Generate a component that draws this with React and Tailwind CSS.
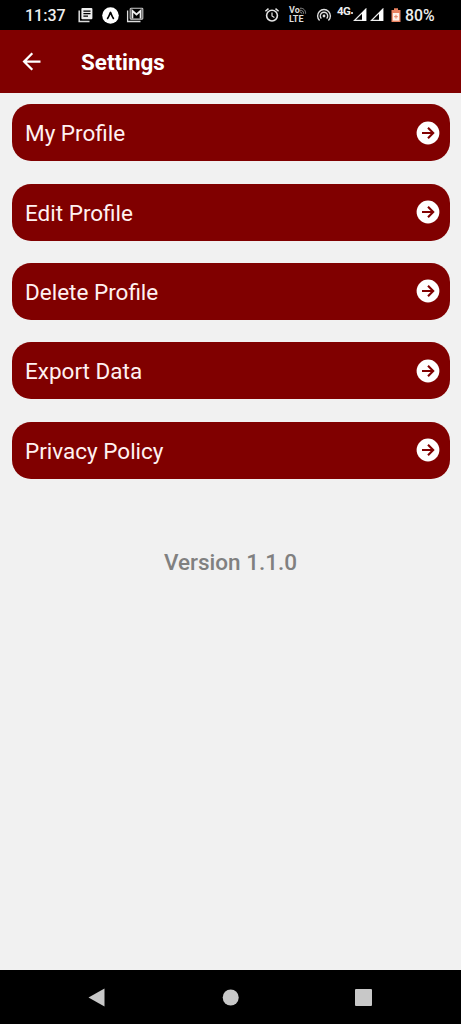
const items = ['My Profile', 'Edit Profile', 'Delete Profile', 'Export Data', 'Privacy Policy'];

function NotesIcon() {
  return (
    <svg className="ml-[13px] h-4 w-4 shrink-0" viewBox="0 0 16 16" fill="none">
      <path d="M1.2 3.5V14.5H11.5" stroke="#ddd" strokeWidth="1.5" />
      <rect x="3.4" y="1" width="11" height="11.3" rx="1" fill="#eee" />
      <path d="M5.4 4.2H12.5M5.4 6.7H12.5M5.4 9.2H10" stroke="#000" strokeWidth="1.2" />
    </svg>
  );
}

function CaretBadgeIcon() {
  return (
    <svg className="ml-2 h-[17px] w-[17px] shrink-0" viewBox="0 0 17 17">
      <circle cx="8.5" cy="8.5" r="8.3" fill="#fff" />
      <path d="M5.6 11.3C6.8 10 7.5 7.4 8.5 5.5C9.5 7.4 10.2 10 11.4 11.3" fill="none" stroke="#000" strokeWidth="1.7" strokeLinecap="round" strokeLinejoin="round" />
    </svg>
  );
}

function MailStackIcon() {
  return (
    <svg className="ml-[7px] h-4 w-[18px] shrink-0" viewBox="0 0 18 16" fill="none">
      <path d="M1.6 3.5V14.5H14.5" stroke="#ddd" strokeWidth="1.3" />
      <rect x="4.2" y="1.3" width="12.6" height="10.8" rx=".8" stroke="#ccc" strokeWidth="1.1" />
      <path d="M6.4 11.5V3.8L10.5 7.5L14.6 3.8V11.5" stroke="#eee" strokeWidth="1.8" />
    </svg>
  );
}

function AlarmIcon() {
  return (
    <svg className="h-4 w-4 shrink-0" viewBox="0 0 16 16" fill="none" stroke="#e5e5e5">
      <circle cx="8" cy="8.6" r="5.4" strokeWidth="1.6" />
      <path d="M8 5.4V9L10.4 10.4" strokeWidth="1.2" />
      <path d="M1.4 4.2L4.5 1.6M14.6 4.2L11.5 1.6" strokeWidth="1.5" />
    </svg>
  );
}

function VoLteIcon() {
  return (
    <div className="ml-[9px] flex h-[18px] w-[18px] shrink-0 flex-col text-[9px] leading-[9px] font-bold text-[#ddd]">
      <div className="flex items-start">
        <span>Vo</span>
        <svg className="h-[9px] w-2" viewBox="0 0 8 9" fill="none" stroke="#aaa" strokeWidth=".9">
          <path d="M0 2C4 1.6 6.4 4.6 6.2 8M0 4.2C2.6 4 4.2 5.8 4 8M0 6.3C1.4 6.2 2 7 2 8" />
        </svg>
      </div>
      <span>LTE</span>
    </div>
  );
}

function HotspotIcon() {
  return (
    <svg className="ml-[9px] h-4 w-4 shrink-0" viewBox="0 0 16 16" fill="none" stroke="#ddd" strokeWidth="1.4">
      <path d="M3.6 13.6A6.4 6.4 0 1 1 12.4 13.6" />
      <path d="M5.4 11.6A3.7 3.7 0 1 1 10.6 11.6" />
      <circle cx="8" cy="9" r="1.4" fill="#ddd" stroke="none" />
    </svg>
  );
}

function SignalIcon() {
  return (
    <svg className="h-[14px] w-[14px] shrink-0" viewBox="0 0 14 14">
      <path d="M1.5 12.4L12.8 1.2V12.4Z" fill="none" stroke="#eee" strokeWidth="1.3" />
      <path d="M9 5L13 .8V12.8H9Z" fill="#fff" />
    </svg>
  );
}

function BatteryIcon() {
  return (
    <svg className="ml-[7px] h-4 w-[10px] shrink-0" viewBox="0 0 10 16">
      <path d="M3 1.2H7V3H9.5V15H.5V3H3Z" fill="#e98260" />
      <rect x="1.8" y="6" width="6.4" height="7.6" fill="#fff1e9" />
      <path d="M5 7.8V11.6M3.1 9.7H6.9" stroke="#e98260" strokeWidth="1" />
    </svg>
  );
}

function StatusBar() {
  return (
    <div className="flex h-[30px] shrink-0 items-center bg-black pr-[27px] pl-[25px] text-[#eee]">
      <span className="w-10 shrink-0 pt-0.5 text-[16px] leading-[28px] font-medium whitespace-nowrap">11:37</span>
      <NotesIcon />
      <CaretBadgeIcon />
      <MailStackIcon />
      <div className="ml-auto flex items-center">
        <AlarmIcon />
        <VoLteIcon />
        <HotspotIcon />
        <span className="ml-[5px] w-[14px] shrink-0 pb-[9px] text-[11.5px] leading-3 font-bold tracking-[-0.5px]">4G</span>
        <svg className="h-[14px] w-0.5 shrink-0" viewBox="0 0 2 14"><circle cx="1" cy="5" r="1" fill="#fff" /></svg>
        <SignalIcon />
        <div className="ml-[3px] flex"><SignalIcon /></div>
        <BatteryIcon />
        <span className="ml-1 w-[29px] shrink-0 pt-0.5 text-[15.8px] leading-[28px] font-medium whitespace-nowrap">80%</span>
      </div>
    </div>
  );
}

function Header() {
  return (
    <header className="flex h-[63px] shrink-0 items-center bg-[#800000] pl-[18px] text-white">
      <svg className="h-[27px] w-[27px]" viewBox="0 0 24 24" fill="#fff">
        <path d="M20 11H7.83l5.59-5.59L12 4l-8 8 8 8 1.41-1.41L7.83 13H20v-2z" />
      </svg>
      <h1 className="ml-9 pt-px text-[22.4px] leading-[30px] font-bold">Settings</h1>
    </header>
  );
}

function Row({ label }) {
  return (
    <button className="flex h-[57px] w-full items-center justify-between rounded-[19px] bg-[#800000] pr-[10px] pl-[13.5px] text-left text-[#fff1f1]">
      <span className="pt-px text-[22.5px] leading-[30px]">{label}</span>
      <svg className="h-6 w-6 shrink-0" viewBox="0 0 24 24" fill="none">
        <circle cx="12" cy="12" r="11.4" fill="#fff" />
        <path d="M6 12H17M12 6.8L17.2 12L12 17.2" stroke="#800000" strokeWidth="2.1" />
      </svg>
    </button>
  );
}

export default function App() {
  return (
    <div className="flex h-screen w-full flex-col overflow-hidden bg-[#f1f1f1] font-[Roboto,sans-serif]">
      <StatusBar />
      <Header />
      <main className="flex flex-1 flex-col px-[11.5px] pt-[11.2px]">
        <div className="flex flex-col gap-[22.4px]">
          {items.map((label) => <Row key={label} label={label} />)}
        </div>
        <p className="mt-[68.2px] text-center text-[22.5px] leading-[30px] font-medium text-[#808080]">Version 1.1.0</p>
      </main>
      <nav className="h-[54px] shrink-0 bg-black">
        <svg className="h-[54px] w-full" viewBox="0 0 461 54" fill="#c8c8c8">
          <path d="M88.5 27.5L104.5 18.5V36.5Z" />
          <circle cx="230.7" cy="27.5" r="8" />
          <rect x="355" y="19" width="17" height="17" rx="1" />
        </svg>
      </nav>
    </div>
  );
}
